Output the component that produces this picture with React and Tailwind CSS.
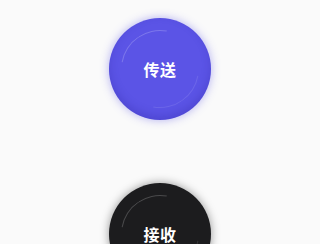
import React from 'react'

function RoundButton({ label, className }) {
  return (
    <button
      className={`relative w-[102px] h-[102px] shrink-0 rounded-full flex items-center justify-center ${className}`}
    >
      <span className="absolute inset-[12px] rounded-full border border-transparent border-t-white/20 border-b-white/10 -rotate-[35deg]" />
      <span className="relative text-white text-base font-bold font-['Noto_Sans_CJK_SC',sans-serif] tracking-[0.5px]">
        {label}
      </span>
    </button>
  )
}

export default function App() {
  return (
    <div className="w-[320px] h-[244px] overflow-hidden bg-[#fafafa] flex flex-col items-center pt-[18px] gap-[63px]">
      <RoundButton
        label="传送"
        className="bg-[#5b54e6] shadow-[0_0_10px_rgba(91,84,230,0.45),inset_0_-4px_8px_rgba(40,30,150,0.25)]"
      />
      <RoundButton
        label="接收"
        className="bg-[#1c1c1e] shadow-[0_0_10px_rgba(0,0,0,0.4)]"
      />
    </div>
  )
}
